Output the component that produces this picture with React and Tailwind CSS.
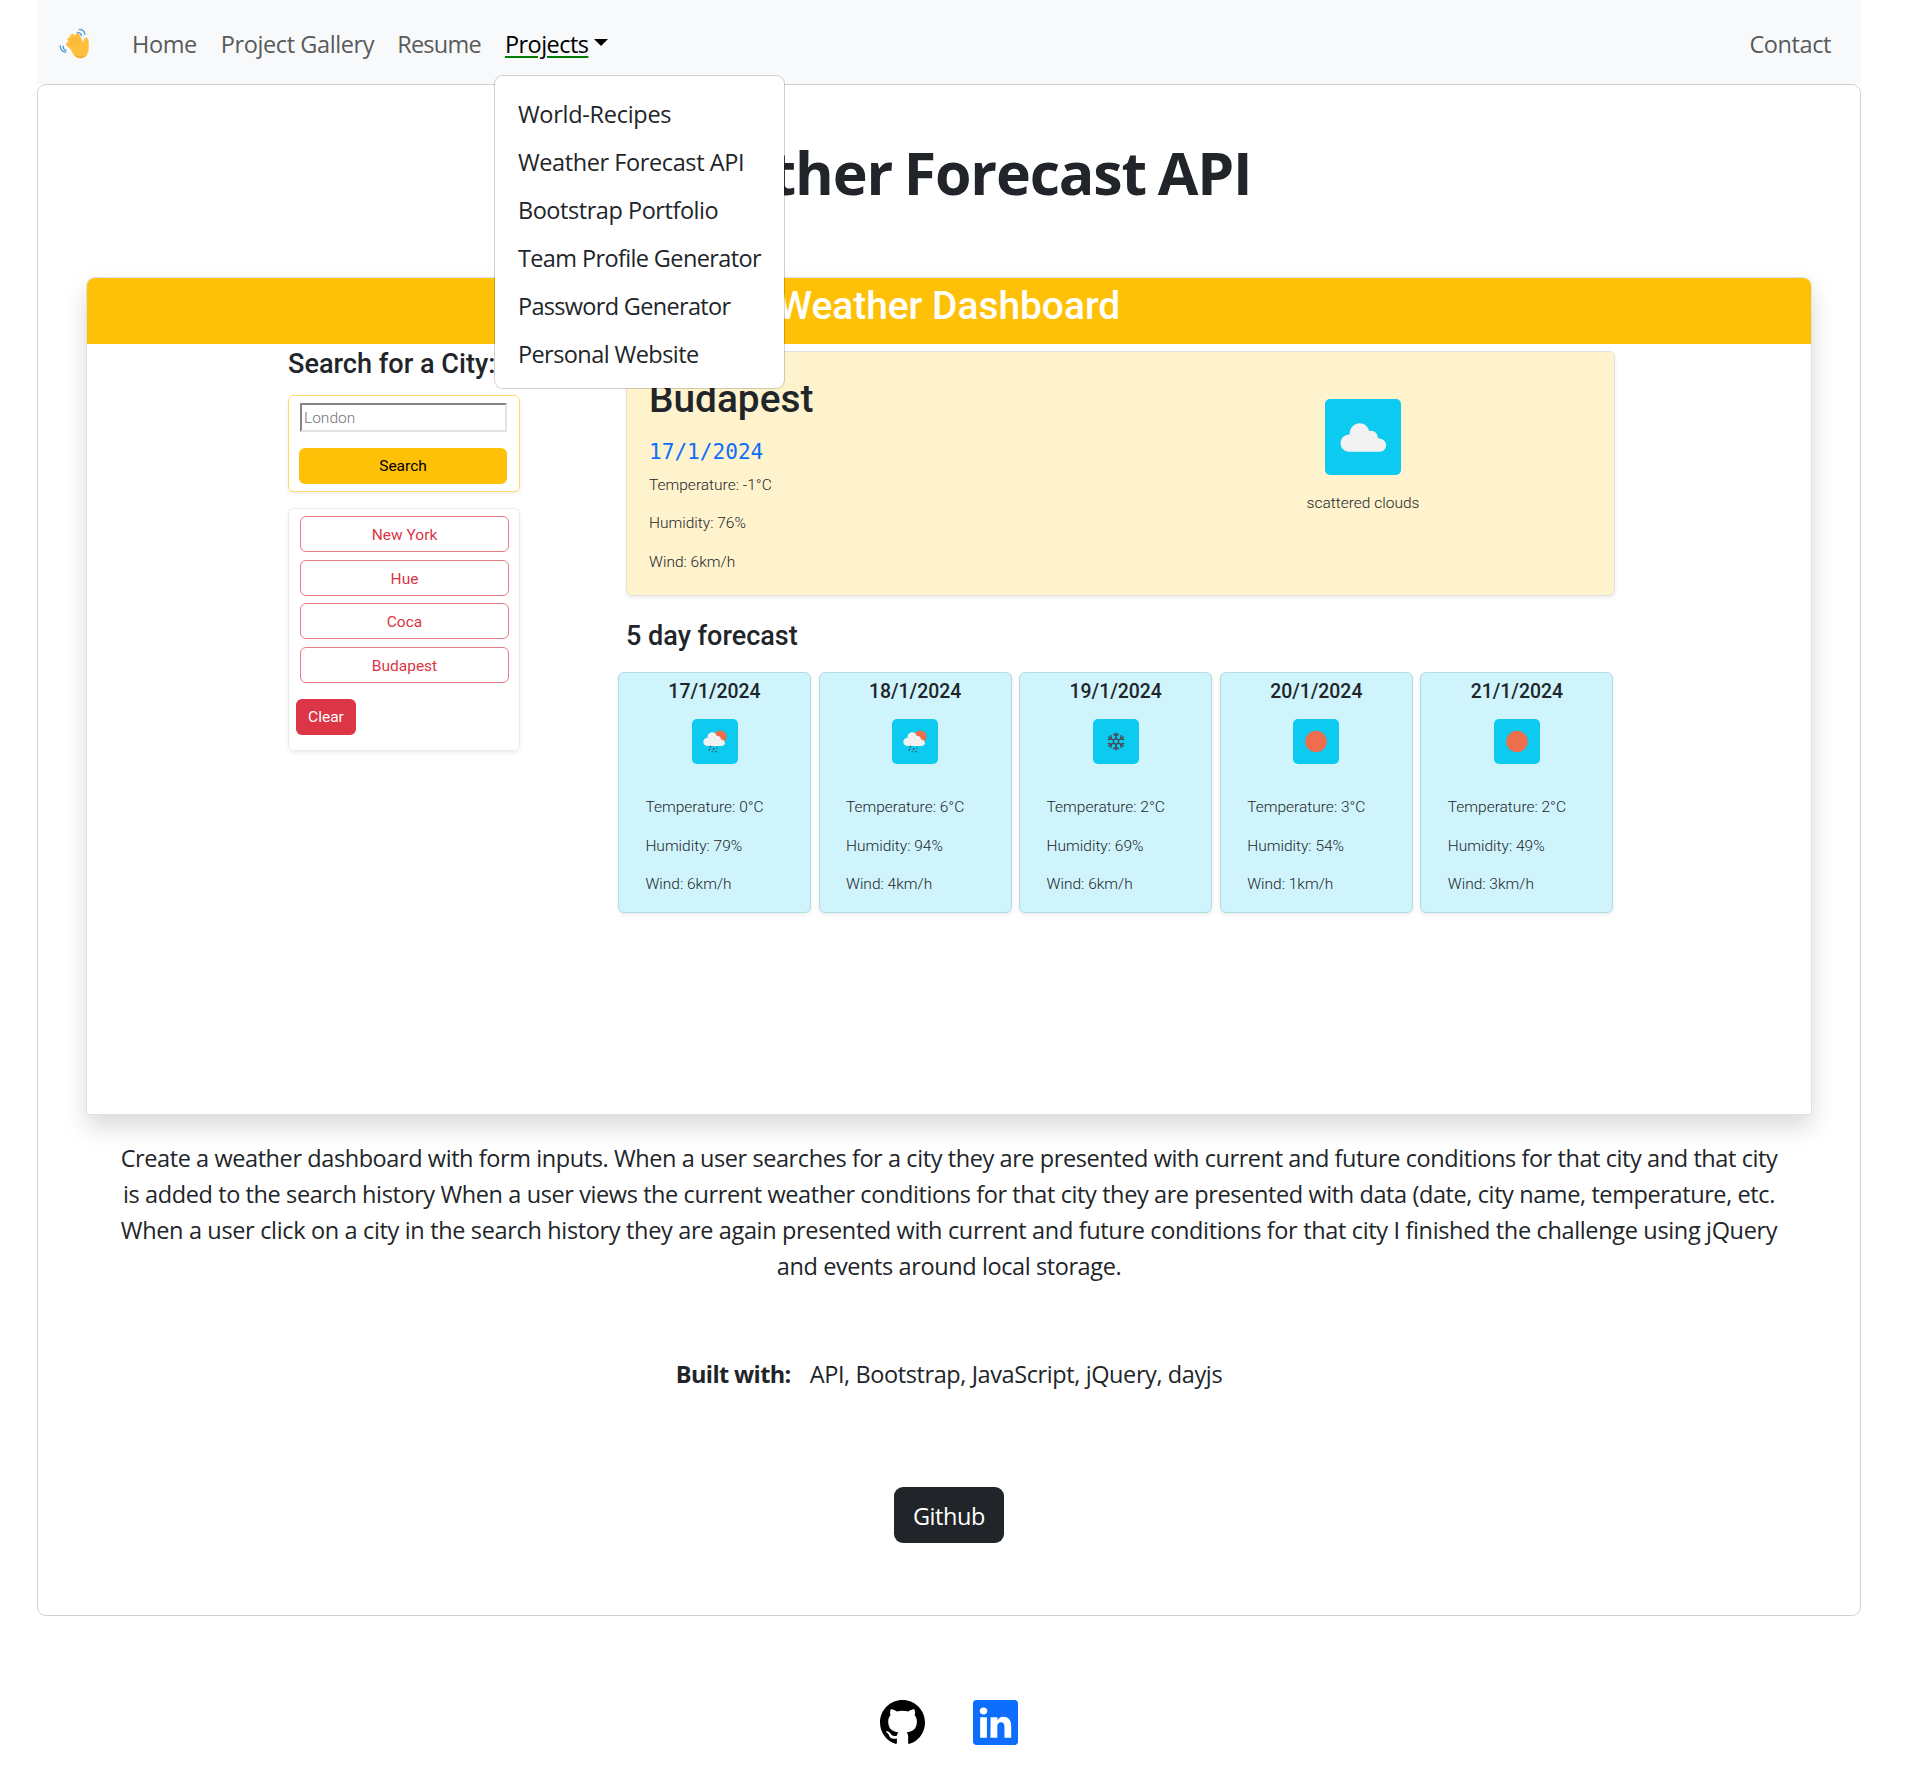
import { BsGithub, BsLinkedin } from 'react-icons/bs';

const projects = [
  { name: 'World-Recipes', tracking: 'tracking-[-0.28px]' },
  { name: 'Weather Forecast API', tracking: 'tracking-[-0.4px]' },
  { name: 'Bootstrap Portfolio', tracking: 'tracking-[-0.45px]' },
  { name: 'Team Profile Generator', tracking: 'tracking-[-0.62px]' },
  { name: 'Password Generator', tracking: 'tracking-[-0.68px]' },
  { name: 'Personal Website', tracking: 'tracking-[-0.57px]' },
];

const history = ['New York', 'Hue', 'Coca', 'Budapest'];

const forecast = [
  { date: '17/1/2024', icon: 'rain', temp: '0°C', humidity: '79%', wind: '6km/h' },
  { date: '18/1/2024', icon: 'rain', temp: '6°C', humidity: '94%', wind: '4km/h' },
  { date: '19/1/2024', icon: 'snow', temp: '2°C', humidity: '69%', wind: '6km/h' },
  { date: '20/1/2024', icon: 'sun', temp: '3°C', humidity: '54%', wind: '1km/h' },
  { date: '21/1/2024', icon: 'sun', temp: '2°C', humidity: '49%', wind: '3km/h' },
];

function WavingHand() {
  return (
    <svg viewBox="18 12 90 94" className="mt-[-2px] block h-[31px] w-[30px]" fill="none" strokeLinecap="round" strokeLinejoin="round">
      <g stroke="#4a9bd6" strokeWidth="4">
        <path d="M73 25c7 0 11 4 13 10" />
        <path d="M79 16c9 0 15 6 17 15" />
        <path d="M30 67c0 7 3 11 9 13" />
        <path d="M21 66c1 12 7 18 17 20" />
      </g>
      <g stroke="#fdbd3c" strokeWidth="14">
        <path d="M72 82L46 61" />
        <path d="M76 74L50 47" />
        <path d="M82 70L58 37" />
        <path d="M88 66L73 35" />
      </g>
      <path d="M50 68L84 50C90 55 91 58 92 59C94 55 92 45 98 42C103 40 106 44 106 52C107 66 108 84 101 94C92 106 74 106 63 94Z" fill="#fdbf3c" stroke="#fdbf3c" strokeWidth="2" />
      <path d="M64 94C74 106 92 106 101 94C96 98 78 102 64 94Z" fill="#f4a22e" />
      <g stroke="#f0a02c" strokeWidth="1.6">
        <path d="M51 56L64 68" />
        <path d="M57 47L71 63" />
        <path d="M68 41L79 60" />
      </g>
    </svg>
  );
}

function Cloud() {
  return (
    <path
      d="M8.5 28.5C3.5 28.5 0 24.8 0 20C0 15.2 3.8 11.6 9 11.4C9 5 13 0 19 0C24 0 27.3 3 28.5 7.8C33.5 6.5 37.2 10 37.4 15C42 15.2 45.5 17.8 45.5 22C45.5 26 42.6 28.5 38.5 28.5Z"
      fill="#f2f2f2"
    />
  );
}

function WeatherIcon({ kind }) {
  return (
    <svg viewBox="0 0 46 46" className="block h-[45px] w-[46px] rounded-[5px] bg-[#0dcaf0]">
      {kind === 'sun' && <circle cx="23" cy="23" r="11" fill="#ec6e4c" />}
      {kind === 'rain' && (
        <g>
          <circle cx="28.3" cy="18.2" r="6.5" fill="#ec6e4c" />
          <g transform="translate(11 13.6) scale(.487)">
            <Cloud />
          </g>
          <path d="M18.6 27.4l-.7 1.8M17.4 30.6l-.6 1.5M21.8 30l-.7 1.8M20.4 33l-.4 1M25.6 29l-.5 1.3M24.3 32.4l-.6 1.6" stroke="#48484a" strokeWidth="1.3" />
        </g>
      )}
      {kind === 'snow' && (
        <g stroke="#48484a" strokeWidth="1.4" fill="none" transform="translate(23 23)">
          {[0, 60, 120, 180, 240, 300].map((a) => (
            <g key={a} transform={`rotate(${a})`}>
              <path d="M0 -2.6V-9.3M-2.8 -8L0 -5.4L2.8 -8M-1.5 -2.6H1.5" />
            </g>
          ))}
        </g>
      )}
    </svg>
  );
}

function Readings({ temp, humidity, wind, className }) {
  return (
    <div className={`text-[15.5px] font-light leading-[38.6px] text-[#212529] ${className}`}>
      <p>Temperature: {temp}</p>
      <p>Humidity: {humidity}</p>
      <p>Wind: {wind}</p>
    </div>
  );
}

function Navbar() {
  return (
    <nav className="flex h-[84px] items-center bg-[#f8f9fa] pl-[22px] pr-[30px] pt-[4px] text-[#595a5b]">
      <WavingHand />
      <span className="ml-[43px]">Home</span>
      <span className="ml-[24px]">Project Gallery</span>
      <span className="ml-[23px] tracking-[-0.75px]">Resume</span>
      <div className="relative ml-[24px] flex items-center text-black">
        <span className="tracking-[-0.55px] underline decoration-[green] decoration-[1.5px] underline-offset-[3px]">Projects</span>
        <span className="ml-[6px] mt-[-3px] border-x-[7.2px] border-t-[7.2px] border-x-transparent border-t-black" />
        <ul className="absolute left-[-11px] top-[49px] z-10 h-[314px] w-[291px] rounded-[9px] border border-black/[.176] bg-white bg-clip-padding pt-[14px] text-[#212529]">
          {projects.map((p) => (
            <li key={p.name} className={`h-[48px] pl-[23px] leading-[48px] ${p.tracking}`}>
              {p.name}
            </li>
          ))}
        </ul>
      </div>
      <span className="ml-auto">Contact</span>
    </nav>
  );
}

function Dashboard() {
  return (
    <section className="-ml-px mt-[69px] h-[838px] w-[1726px] overflow-hidden rounded-t-[9px] border border-[#dee2e6] bg-white font-[Roboto,sans-serif] tracking-normal text-[#212529] shadow-[0_12px_24px_rgba(0,0,0,0.15)]">
      <header className="h-[66px] bg-[#ffc107] pt-[4px] text-center text-[38.9px] font-medium leading-[47px] text-white">
        Weather Dashboard
      </header>
      <div className="flex pl-[201px]">
        <aside className="w-[232px] pt-[4px]">
          <h3 className="text-[27.1px] font-medium leading-[32px]">Search for a City:</h3>
          <div className="mt-[15px] h-[97px] rounded-[6px] border border-[#ffda6a] px-[10px] pt-[7px] shadow-[0_2px_4px_rgba(0,0,0,0.075)]">
            <div className="ml-px h-[29px] w-[207px] border-2 border-b-[#e3e3e3] border-l-[#858585] border-r-[#e3e3e3] border-t-[#858585] pl-[2px] text-[15.5px] font-light leading-[27px] text-[#757575]">
              London
            </div>
            <div className="mt-[16px] h-[36px] w-[208px] rounded-[6px] bg-[#ffc107] text-center text-[15.5px] leading-[37px] text-black">
              Search
            </div>
          </div>
          <div className="mt-[16px] h-[243px] rounded-[6px] border border-[#e9ebed] pl-[7px] pt-[7px] shadow-[0_2px_4px_rgba(0,0,0,0.075)]">
            <div className="ml-[4px] flex flex-col gap-[7.7px]">
              {history.map((c) => (
                <div key={c} className="h-[36px] w-[209px] rounded-[6px] border border-[#e87b86] text-center text-[15.5px] leading-[36px] text-[#dc3545]">
                  {c}
                </div>
              ))}
            </div>
            <div className="mt-[16px] h-[36px] w-[60px] rounded-[6px] bg-[#dc3545] text-center text-[15.5px] leading-[37px] text-white">
              Clear
            </div>
          </div>
        </aside>
        <main className="ml-[106px] mt-[7px] w-[989px]">
          <div className="flex h-[245px] rounded-[6px] border border-[#e3e2d8] bg-[#fff3cd] shadow-[0_2px_4px_rgba(0,0,0,0.075)]">
            <div className="flex-1 pl-[22px] pt-[24px]">
              <h1 className="text-[38.8px] font-medium leading-[46px]">Budapest</h1>
              <p className="mt-[18px] font-['DejaVu_Sans_Mono',monospace] text-[21.1px] leading-[24px] text-[#0d6efd]">17/1/2024</p>
              <Readings className="mt-[1.6px]" temp="-1°C" humidity="76%" wind="6km/h" />
            </div>
            <div className="flex w-[503px] flex-col items-center pl-px pt-[47px]">
              <svg viewBox="0 0 76 76" className="block size-[76px] rounded-[5px] bg-[#0dcaf0]">
                <g transform="translate(15.6 24.2)">
                  <Cloud />
                </g>
              </svg>
              <p className="mt-[16px] text-[15.5px] font-light leading-[24px]">scattered clouds</p>
            </div>
          </div>
          <h3 className="mt-[24px] text-[27px] font-medium leading-[32px]">5 day forecast</h3>
          <div className="-ml-[8px] mt-[19.5px] flex w-[1003px] gap-[7.6px]">
            {forecast.map((d) => (
              <div key={d.date} className="h-[241px] w-[193px] shrink-0 rounded-[6px] border border-[#b3dbe3] bg-[#cff4fc] pt-[7.5px] shadow-[0_2px_4px_rgba(0,0,0,0.075)]">
                <h5 className="text-center text-[19.4px] font-medium leading-[24px]">{d.date}</h5>
                <div className="mt-[15px] flex justify-center">
                  <WeatherIcon kind={d.icon} />
                </div>
                <Readings className="mt-[24.3px] pl-[26.4px]" temp={d.temp} humidity={d.humidity} wind={d.wind} />
              </div>
            ))}
          </div>
        </main>
      </div>
    </section>
  );
}

export default function App() {
  return (
    <div className="min-h-[1777px] bg-white pl-[37px] pr-[60px] font-['Open_Sans',sans-serif] text-[23.5px] leading-[36px] tracking-[-0.4px]">
      <Navbar />
      <article className="h-[1532px] rounded-[9px] border border-black/[.176] text-center text-[#212529]">
        <h1 className="mt-[51px] text-[59px] font-bold leading-[72px] tracking-[-1.15px] [word-spacing:-2.5px]">Weather Forecast API</h1>
        <div className="pl-[49px] text-left">
          <Dashboard />
        </div>
        <p className="mt-[25px] whitespace-nowrap">
          <span className="tracking-[-0.415px]">
            Create a weather dashboard with form inputs. When a user searches for a city they are presented with current and future conditions for that city and that city
          </span>
          <br />
          is added to the search history When a user views the current weather conditions for that city they are presented with data (date, city name, temperature, etc.
          <br />
          <span className="tracking-[-0.345px]">
            When a user click on a city in the search history they are again presented with current and future conditions for that city I finished the challenge using jQuery
          </span>
          <br />
          and events around local storage.
        </p>
        <p className="mt-[72px] flex justify-center">
          <b className="mr-[19px] font-bold tracking-[-0.6px]">Built with:</b>
          <span>API, Bootstrap, JavaScript, jQuery, dayjs</span>
        </p>
        <div className="mx-auto mt-[95px] h-[56px] w-[110px] rounded-[9px] bg-[#212529] leading-[58px] text-white">Github</div>
      </article>
      <footer className="mt-[84px] flex justify-center gap-[48px]">
        <BsGithub className="size-[45px] text-black" />
        <BsLinkedin className="size-[45px] text-[#0d6efd]" />
      </footer>
    </div>
  );
}
